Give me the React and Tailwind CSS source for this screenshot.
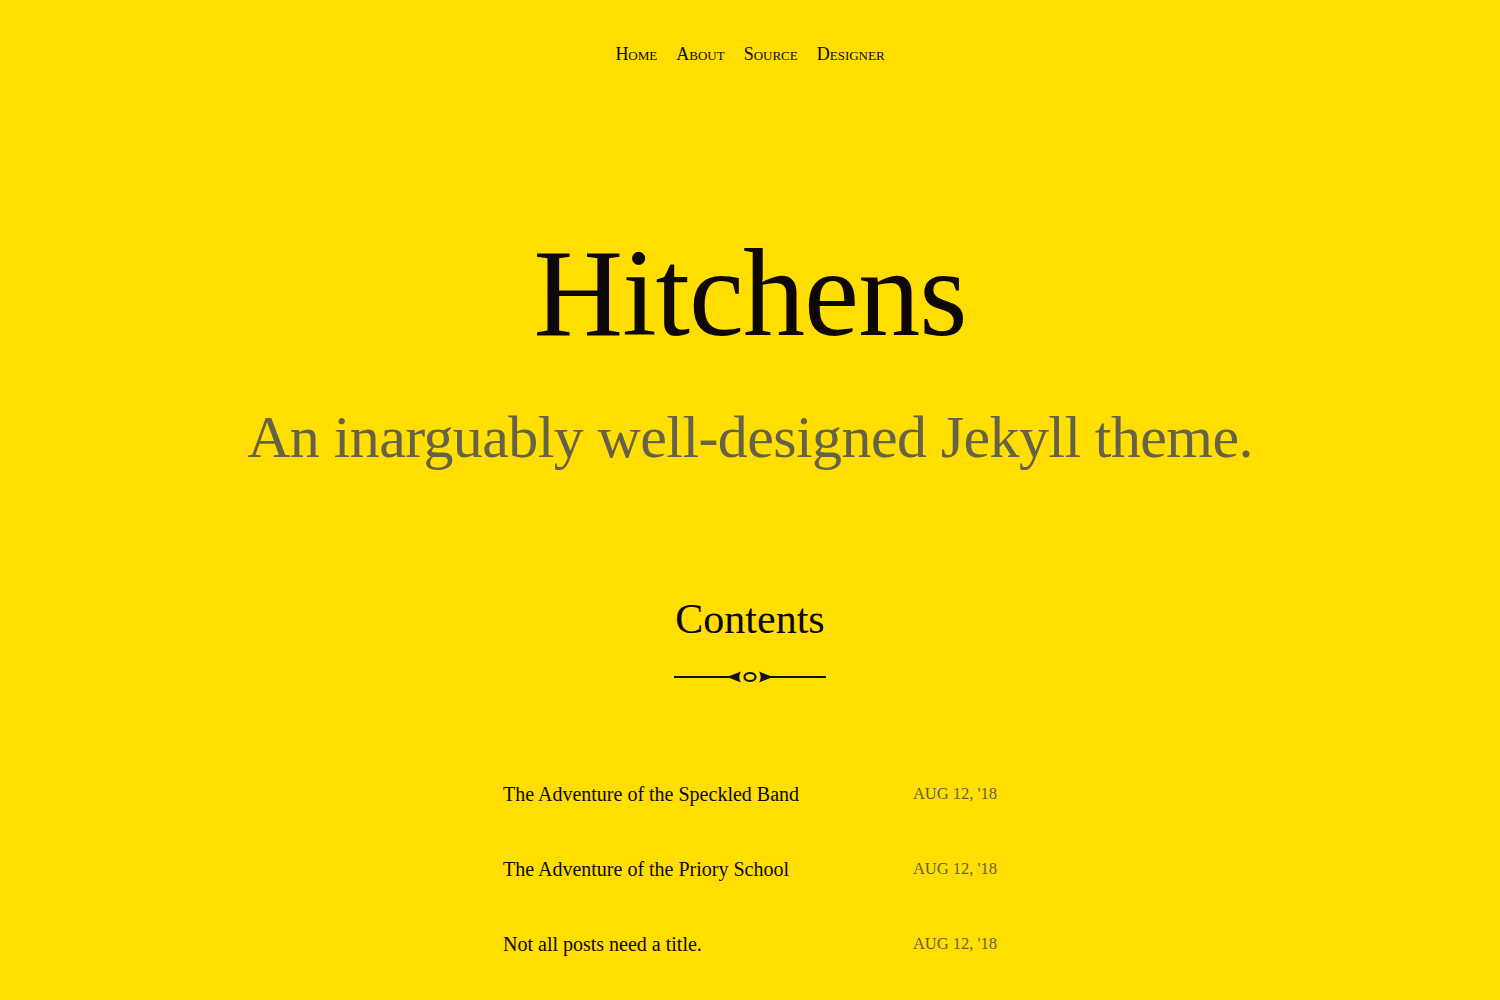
import React from "react";

const serif = { fontFamily: '"Liberation Serif", "Times New Roman", serif' };

function Ornament() {
  return (
    <svg width="152" height="14" viewBox="0 0 152 14" className="block">
      <line x1="0" y1="7" x2="56" y2="7" stroke="#111" strokeWidth="2" />
      <line x1="96" y1="7" x2="152" y2="7" stroke="#111" strokeWidth="2" />
      <path d="M53 7 L67 1.5 Q63.5 7 67 12.5 Z" fill="#111" />
      <path d="M99 7 L85 1.5 Q88.5 7 85 12.5 Z" fill="#111" />
      <ellipse cx="76" cy="7" rx="5.5" ry="4" fill="none" stroke="#111" strokeWidth="2.2" />
    </svg>
  );
}

const posts = [
  "The Adventure of the Speckled Band",
  "The Adventure of the Priory School",
  "Not all posts need a title.",
];

export default function App() {
  return (
    <div className="min-h-[1000px] w-full bg-[#ffde00] text-[#0d0806]" style={serif}>
      <nav className="flex justify-center gap-[19px] pt-[41px] text-[18px] [font-variant:small-caps]">
        <a>Home</a>
        <a>About</a>
        <a>Source</a>
        <a>Designer</a>
      </nav>
      <header className="flex flex-col items-center">
        <h1 className="mt-[164px] text-[124px] leading-[1] tracking-[-1px]">Hitchens</h1>
        <p className="mt-[51px] text-[60px] leading-[1] text-[#66624a] tracking-[-0.6px]">
          An inarguably well-designed Jekyll theme.
        </p>
      </header>
      <section className="flex flex-col items-center">
        <h2 className="mt-[131px] text-[42px] leading-[1]">Contents</h2>
        <div className="mt-[30px]">
          <Ornament />
        </div>
      </section>
      <ul className="mx-auto mt-[100px] w-[494px]">
        {posts.map((p) => (
          <li key={p} className="flex h-[75px] items-start justify-between">
            <span className="text-[20px] leading-[1]">{p}</span>
            <span className="text-[16.5px] leading-[1] pt-[2px] text-[#66624a]">AUG 12, '18</span>
          </li>
        ))}
      </ul>
    </div>
  );
}
